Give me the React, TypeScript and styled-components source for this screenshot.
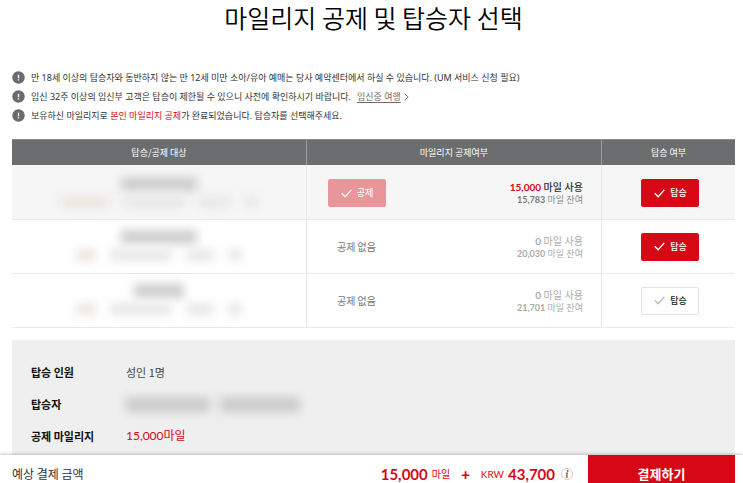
import React from "react";
import styled, { createGlobalStyle, css } from "styled-components";

const RED = "#d60815";
const KOREAN = '"Noto Sans CJK KR", sans-serif';
const MIXED = '"Noto Sans", "Noto Sans CJK KR", sans-serif';
const NUMERIC = 'Lato, "Noto Sans CJK KR", sans-serif';

const GlobalStyle = createGlobalStyle`
  * { box-sizing: border-box; }
  body {
    margin: 0;
    background: #fff;
    color: #333;
    font-family: ${KOREAN};
  }
  button { font-family: inherit; cursor: pointer; }
`;

const Page = styled.div`
  height: 100vh;
  overflow: hidden;
`;

const Content = styled.main`
  padding: 0 8px 0 12px;
`;

const Title = styled.h1`
  margin: 0;
  height: 68px;
  color: #000;
  font-size: 25px;
  font-weight: 350;
  line-height: 34px;
  text-align: center;
`;

const Notices = styled.ul`
  margin: 0 0 14px;
  padding: 0;
  list-style: none;
`;

const Notice = styled.li`
  display: flex;
  align-items: center;
  gap: 6px;
  height: 19px;
  font-family: ${MIXED};
  font-size: 9px;
  line-height: 19px;
  white-space: nowrap;
  & > svg { flex: none; }
  em { color: ${RED}; font-style: normal; }
`;

const TravelLink = styled.a`
  display: inline-flex;
  align-items: center;
  gap: 3px;
  margin-left: 6px;
  color: #7c6558;
  text-decoration: none;
  span { text-decoration: underline; text-underline-offset: 2px; }
`;

const Table = styled.table`
  width: 100%;
  border-collapse: separate;
  border-spacing: 0;
  table-layout: fixed;
`;

const WideCol = styled.col`
  width: 40.8%;
`;

const HeadCell = styled.th`
  height: 26px;
  padding: 0;
  border-top: 1px solid #898b8c;
  border-right: 1px solid #9b9d9e;
  background: #6b6d6e;
  color: #fff;
  font-size: 9px;
  font-weight: 400;
  line-height: 14px;
  &:last-child { border-right: 0; }
`;

const Cell = styled.td`
  height: 54px;
  padding: 0;
  border-right: 1px solid #e8e8e8;
  border-bottom: 1px solid #e9e9e9;
  text-align: center;
  vertical-align: middle;
  &:last-child { border-right: 0; padding-left: 4px; }
`;

const Row = styled.tr<{ $active?: boolean }>`
  background: ${(p) => (p.$active ? "#f6f6f6" : "#fff")};
  ${Cell} {
    height: ${(p) => (p.$active ? 55 : 54)}px;
    padding-top: ${(p) => (p.$active ? 2 : 0)}px;
  }
`;

const Masked = styled.div`
  display: flex;
  flex-direction: column;
  align-items: center;
  gap: 5px;
  padding-bottom: 2px;
`;

const MaskLine = styled.div`
  display: flex;
  justify-content: center;
  gap: 14px;
`;

const Smudge = styled.span<{ $width: number; $height: number; $color: string }>`
  display: block;
  width: ${(p) => p.$width}px;
  height: ${(p) => p.$height}px;
  background: ${(p) => p.$color};
  filter: blur(5px);
`;

const Deduction = styled.div`
  display: flex;
  align-items: center;
  justify-content: space-between;
  padding: 0 18px 0 21px;
`;

const NoDeduction = styled.span`
  padding-left: 9px;
  color: #777;
  font-size: 10px;
`;

const Miles = styled.div<{ $active?: boolean }>`
  color: ${(p) => (p.$active ? "#333" : "#aaa")};
  font-family: ${NUMERIC};
  font-size: 10px;
  font-weight: ${(p) => (p.$active ? 500 : 400)};
  line-height: 14px;
  text-align: right;
  strong {
    color: ${(p) => (p.$active ? RED : "#aaa")};
    font-weight: 700;
  }
`;

const Balance = styled.div<{ $active?: boolean }>`
  color: ${(p) => (p.$active ? "#888" : "#aaa")};
  font-size: 9px;
  font-weight: 400;
  line-height: 12px;
  b { color: ${(p) => (p.$active ? "#777" : "#aaa")}; font-weight: 700; }
`;

const filled = css`
  border-color: ${RED};
  background: ${RED};
  color: #fff;
`;

const Toggle = styled.button`
  display: inline-flex;
  align-items: center;
  justify-content: center;
  gap: 5px;
  width: 58px;
  height: 28px;
  padding: 0;
  border: 1px solid #e3e3e3;
  border-radius: 2px;
  background: #fff;
  color: #222;
  font-size: 9px;
  font-weight: 500;
  line-height: 14px;
  vertical-align: middle;
  svg { color: #bbb; }
  &[aria-pressed="true"] { ${filled} }
  &[aria-pressed="true"] svg { color: #fff; }
  &:disabled { opacity: 0.4; cursor: default; }
`;

const Summary = styled.dl`
  display: grid;
  grid-template-columns: 95px 1fr;
  grid-auto-rows: 32px;
  align-items: center;
  margin: 12px 0 0;
  padding: 16px 19px 3px;
  background: #efefef;
  font-size: 11px;
  line-height: 16px;
`;

const Term = styled.dt`
  color: #111;
  font-weight: 700;
`;

const Detail = styled.dd<{ $accent?: boolean }>`
  display: flex;
  gap: 10px;
  margin: 0;
  color: ${(p) => (p.$accent ? RED : "#444")};
  font-family: ${(p) => (p.$accent ? NUMERIC : KOREAN)};
  font-size: ${(p) => (p.$accent ? 12 : 11)}px;
`;

const PayBar = styled.footer`
  position: relative;
  display: flex;
  align-items: stretch;
  height: 37px;
  padding: 0 8px 0 12px;
  background: #fff;
  box-shadow: 0 -1px 3px rgba(0, 0, 0, 0.22);
`;

const PayLabel = styled.span`
  flex: 1;
  align-self: center;
  font-size: 12px;
  line-height: 18px;
`;

const Total = styled.div`
  display: flex;
  align-items: center;
  margin-right: 15px;
  color: ${RED};
  font-family: ${NUMERIC};
  font-size: 10px;
  line-height: 18px;
  white-space: nowrap;
`;

const Amount = styled.strong`
  font-size: 15px;
  font-weight: 700;
`;

const Unit = styled.span`
  margin: 0 4px;
`;

const Plus = styled.span`
  margin: 0 5px;
  padding: 0 2px;
  font-size: 15px;
  font-weight: 900;
`;

const InfoButton = styled.button`
  display: flex;
  margin-left: 6px;
  padding: 0;
  border: 0;
  background: none;
`;

const PayButton = styled.button`
  width: 147px;
  padding: 0;
  border: 0;
  background: ${RED};
  color: #fff;
  font-size: 13px;
  font-weight: 700;
  line-height: 18px;
`;

const AlertIcon = () => (
  <svg width="13" height="13" viewBox="0 0 13 13" aria-hidden="true">
    <circle cx="6.5" cy="6.5" r="6.2" fill="#696b6e" />
    <path d="M6.5 3.8v3.4M6.5 8.3v1.1" stroke="#fff" strokeWidth="1.3" />
  </svg>
);

const CheckIcon = () => (
  <svg width="11" height="9" viewBox="0 0 11 9" fill="none" aria-hidden="true">
    <path d="M.7 4.2 4.2 7.8 10.3.9" stroke="currentColor" strokeWidth="1.4" />
  </svg>
);

const ChevronIcon = () => (
  <svg width="5" height="8" viewBox="0 0 5 8" fill="none" aria-hidden="true">
    <path d="M.6.8 4.2 4 .6 7.2" stroke="currentColor" strokeWidth=".9" />
  </svg>
);

const InfoIcon = () => (
  <svg width="12" height="12" viewBox="0 0 12 12" fill="none" aria-hidden="true">
    <circle cx="6" cy="6" r="5.5" stroke="#c9ccd2" />
    <circle cx="6.7" cy="3.1" r="1" fill="#b06a28" />
    <path d="M4.9 5.2h1.4L5.5 9h1.3" stroke="#b06a28" strokeWidth="1.4" />
  </svg>
);

type Passenger = {
  nameWidth: number;
  details: number[];
  used: string;
  left: string;
  deducts: boolean;
  boarding: boolean;
};

const passengers: Passenger[] = [
  { nameWidth: 76, details: [48, 62, 32, 12], used: "15,000", left: "15,783", deducts: true, boarding: true },
  { nameWidth: 76, details: [20, 62, 28, 14], used: "0", left: "20,030", deducts: false, boarding: true },
  { nameWidth: 50, details: [20, 62, 28, 14], used: "0", left: "21,701", deducts: false, boarding: false },
];

const PassengerRow = ({ nameWidth, details, used, left, deducts, boarding }: Passenger) => (
  <Row $active={deducts}>
    <Cell>
      <Masked>
        <Smudge $width={nameWidth} $height={14} $color="#cecece" />
        <MaskLine>
          {details.map((width, i) => (
            <Smudge key={i} $width={width} $height={12} $color={i === 0 ? "#eee6e0" : "#e8e8e8"} />
          ))}
        </MaskLine>
      </Masked>
    </Cell>
    <Cell>
      <Deduction>
        {deducts ? (
          <Toggle type="button" aria-pressed="true" disabled>
            <CheckIcon />
            공제
          </Toggle>
        ) : (
          <NoDeduction>공제 없음</NoDeduction>
        )}
        <Miles $active={deducts}>
          <strong>{used}</strong> 마일 사용
          <Balance $active={deducts}>
            <b>{left}</b> 마일 잔여
          </Balance>
        </Miles>
      </Deduction>
    </Cell>
    <Cell>
      <Toggle type="button" aria-pressed={boarding}>
        <CheckIcon />
        탑승
      </Toggle>
    </Cell>
  </Row>
);

export default function App() {
  return (
    <Page>
      <GlobalStyle />
      <Content>
        <Title>마일리지 공제 및 탑승자 선택</Title>
        <Notices>
          <Notice>
            <AlertIcon />
            <span>만 18세 이상의 탑승자와 동반하지 않는 만 12세 미만 소아/유아 예매는 당사 예약센터에서 하실 수 있습니다. (UM 서비스 신청 필요)</span>
          </Notice>
          <Notice>
            <AlertIcon />
            <span>
              임신 32주 이상의 임신부 고객은 탑승이 제한될 수 있으니 사전에 확인하시기 바랍니다.
              <TravelLink href="#pregnancy">
                <span>임신중 여행</span>
                <ChevronIcon />
              </TravelLink>
            </span>
          </Notice>
          <Notice>
            <AlertIcon />
            <span>
              보유하신 마일리지로 <em>본인 마일리지 공제</em>가 완료되었습니다. 탑승자를 선택해주세요.
            </span>
          </Notice>
        </Notices>
        <Table>
          <colgroup>
            <WideCol />
            <WideCol />
            <col />
          </colgroup>
          <thead>
            <tr>
              <HeadCell scope="col">탑승/공제 대상</HeadCell>
              <HeadCell scope="col">마일리지 공제여부</HeadCell>
              <HeadCell scope="col">탑승 여부</HeadCell>
            </tr>
          </thead>
          <tbody>
            {passengers.map((p) => (
              <PassengerRow key={p.left} {...p} />
            ))}
          </tbody>
        </Table>
        <Summary>
          <Term>탑승 인원</Term>
          <Detail>성인 1명</Detail>
          <Term>탑승자</Term>
          <Detail>
            <Smudge $width={84} $height={15} $color="#cbcbcb" />
            <Smudge $width={80} $height={15} $color="#cbcbcb" />
          </Detail>
          <Term>공제 마일리지</Term>
          <Detail $accent>15,000마일</Detail>
        </Summary>
      </Content>
      <PayBar>
        <PayLabel>예상 결제 금액</PayLabel>
        <Total>
          <Amount>15,000</Amount>
          <Unit>마일</Unit>
          <Plus>+</Plus>
          <Unit>KRW</Unit>
          <Amount>43,700</Amount>
          <InfoButton type="button" aria-label="결제 금액 안내">
            <InfoIcon />
          </InfoButton>
        </Total>
        <PayButton type="button">결제하기</PayButton>
      </PayBar>
    </Page>
  );
}
